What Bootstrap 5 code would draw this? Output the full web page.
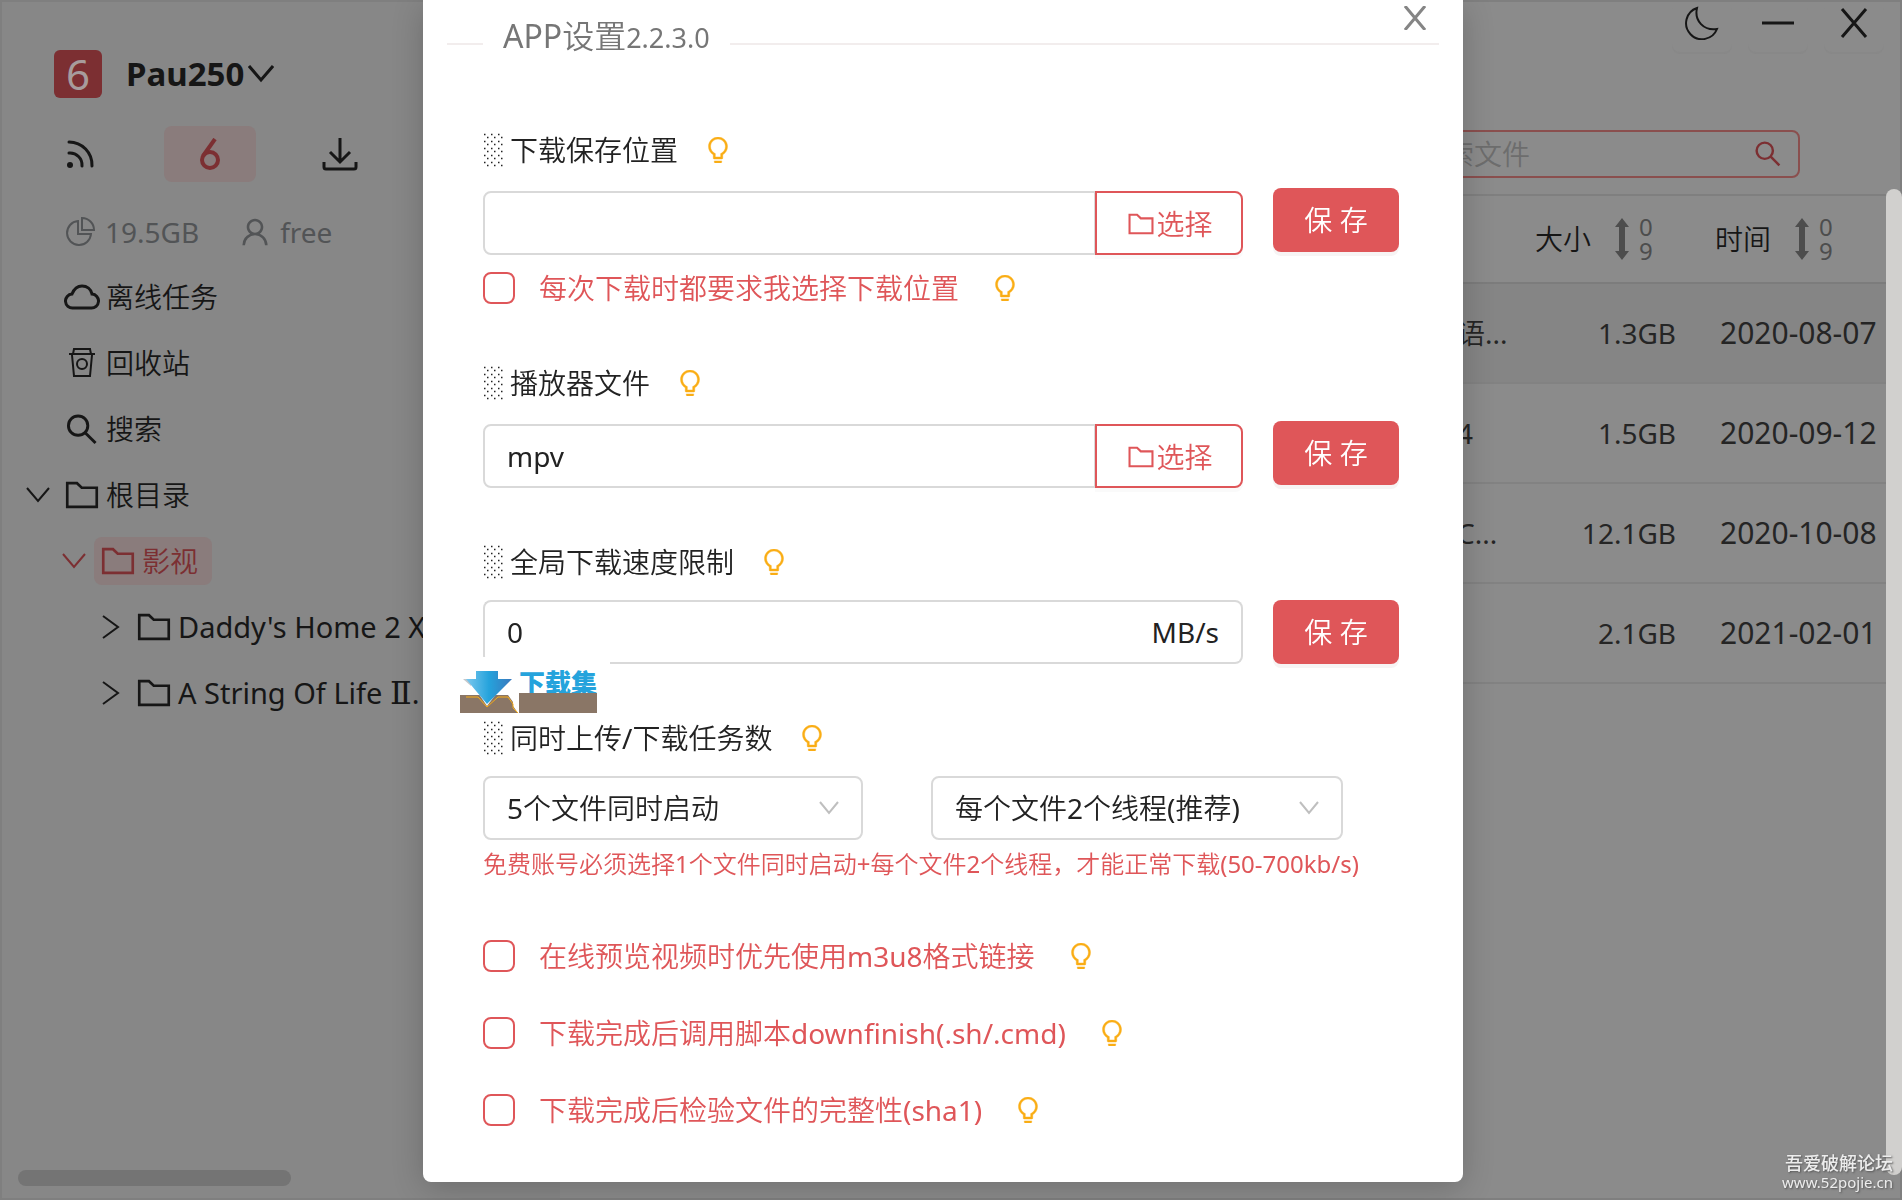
<!DOCTYPE html>
<html lang="zh-CN">
<head>
<meta charset="utf-8">
<meta name="viewport" content="width=device-width, initial-scale=1">
<title>APP设置</title>
<link href="https://cdn.jsdelivr.net/npm/bootstrap@5.3.0/dist/css/bootstrap.min.css" rel="stylesheet">
<style>
  :root { --brand: #df5659; --brand-dim: #7c2f32; --ink: #161616; --rule: #7f7f7f; --line: #d9d9d9; }
  body { font-family: "Noto Sans", "Noto Sans CJK SC DemiLight", "Noto Sans CJK SC Light", "Noto Sans CJK SC", sans-serif; font-weight: 400; font-size: 28px; line-height: 40px; color: var(--ink); background: #8b8b8b; overflow: hidden; }
  svg { display: block; flex: none; fill: currentColor; }
  .stroked { fill: none; stroke: currentColor; }
  a { color: inherit; text-decoration: none; }

  .app-shell { border: 2px solid var(--rule); }
  .app-side { width: 558px; background: #878787; padding: 46px 0 12px; }
  .brand-row { padding-left: 52px; gap: 24px; height: 52px; }
  .brand-tile { width: 48px; height: 48px; border-radius: 6px; background: var(--brand-dim); color: #a79c9c; font-size: 42px; line-height: 48px; }
  .brand-name { font-size: 33px; font-weight: 700; gap: 4px; }
  .tool-row { padding-left: 64px; margin-top: 26px; width: 356px; height: 56px; }
  .tool-on { width: 92px; height: 56px; border-radius: 8px; background: #8a7c7c; color: var(--brand-dim); margin-left: 4px; }
  .quota-row { padding-left: 63px; height: 64px; margin-top: 18px; color: #525456; gap: 10px; }
  .quota-row .who { margin-left: 31px; }
  .side-item { height: 66px; gap: 6px; white-space: nowrap; }
  .side-item.lv0 { padding-left: 62px; }
  .side-item.lv1 { padding-left: 24px; }
  .side-item.lv2 { padding-left: 60px; color: var(--brand-dim); }
  .side-item.lv3 { padding-left: 96px; font-size: 29px; }
  .side-item .twist { width: 24px; margin-right: 8px; }
  .node { gap: 6px; height: 48px; }
  .roman { font-family: "DejaVu Serif", "Liberation Serif", serif; font-size: 32px; line-height: 40px; }
  .lv2 .node { background: #8a7c7c; border-radius: 8px; padding: 0 14px 0 6px; margin-left: -6px; }
  .side-scroll { width: 273px; height: 16px; border-radius: 8px; background: #747474; margin-left: 16px; }

  .win-row { padding-right: 16px; gap: 16px; height: 52px; }
  .win-btn { width: 60px; height: 50px; border: 0; padding: 0 0 8px; background: transparent; color: var(--ink); border-radius: 8px; box-shadow: 0 2px 0 #888; }
  .find-row { padding: 76px 100px 16px 0; }
  .find-box { width: 420px; height: 48px; border: 2px solid #8a4f4e; border-radius: 8px; padding: 0 17px 0 62px; color: var(--brand-dim); }
  .find-box input { background: transparent; border: 0; outline: 0; min-width: 0; color: var(--ink); }
  .find-box input::placeholder { color: #6d6d6d; opacity: 1; }
  .files { width: calc(100% - 14px); table-layout: fixed; border-collapse: collapse; border-top: 2px solid var(--rule); }
  .files th { font-weight: 400; height: 88px; padding: 0; border-bottom: 2px solid #7c7c7c; }
  .files td { height: 100px; padding: 0; border-bottom: 2px solid #828282; color: #252525; white-space: nowrap; }
  .files tbody tr:first-child td { background: #858585; }
  .files .c-size { width: 180px; }
  .files .c-date { width: 210px; }
  .files td.f-name { padding-left: 897px; }
  .files td.f-size { text-align: right; }
  .files td.f-date { padding-left: 44px; font-size: 30px; }
  .sorter { gap: 10px; color: #4d4d4d; padding-left: 39px; }
  .sorter .cap { color: var(--ink); margin-right: 14px; }
  .sorter .digits { font-size: 24px; line-height: 24px; }
  .page-scroll { position: fixed; right: 0; top: 189px; bottom: 25px; width: 16px; border-radius: 8px; background: #d1d0ce; }

  .dialog-layer { position: fixed; inset: 0 16px 0 0; }
  .dialog-card { width: 1040px; background: #fff; border-radius: 0 0 8px 8px; box-shadow: 0 6px 32px rgba(0,0,0,.2); color: #222; padding: 0 24px 51px; }
  .dialog-head { height: 88px; gap: 20px; color: #767676; }
  .dialog-head .rule-a { width: 36px; }
  .dialog-head .dash { border-top: 2px solid #f2eded; }
  .dialog-head h1 { font-size: 32px; font-weight: 400; line-height: 44px; padding-bottom: 14px; }
  .dialog-head h1 span { font-size: 27px; }
  .dialog-close { position: absolute; top: 0; right: 24px; width: 48px; height: 36px; border: 0; background: none; padding: 0; color: #858585; }
  .dialog-body { padding: 42px 40px 0 36px; gap: 54px; }
  .sec-title { height: 40px; margin-bottom: 18px; }
  .sec-title .shade { margin-right: 7px; }
  .bulb { color: #faad14; margin-left: 27px; }
  .field-row { gap: 30px; }
  .pick-row .input-group { margin-top: 3px; }
  .input-group { width: auto; }
  .input-group .form-control { height: 64px; border: 2px solid var(--line); border-radius: 8px; padding: 0 22px; font-size: 28px; color: #222; }
  .speed .form-control { border-right: 0; }
  .speed .input-group-text { background: #fff; border: 2px solid var(--line); border-left: 0; border-radius: 8px; padding: 0 22px; font-size: 28px; color: #222; }
  .btn-pick { width: 148px; border: 2px solid var(--brand); border-radius: 0 8px 8px 0; color: var(--brand); font-size: 28px; padding: 2px 0 0 2px; gap: 1px; box-shadow: 0 4px 0 #fafafa; }
  .btn-keep { width: 126px; height: 64px; border: 0; border-radius: 8px; background: var(--brand); color: #fff; font-size: 28px; padding: 0; box-shadow: 0 4px 0 #f7f4f4; }
  .tick-row { height: 42px; color: var(--brand); padding: 0; margin: 0; }
  .tick-row .form-check-input { width: 32px; height: 32px; border: 2px solid var(--brand); border-radius: 8px; margin: 0 24px 0 0; float: none; }
  .tick-row .bulb { margin-left: 33px; }
  .tick-first { margin-top: 12px; }
  .ticks { gap: 35px; }
  .form-select { --bs-form-select-bg-img: url("data:image/svg+xml,%3Csvg xmlns='http://www.w3.org/2000/svg' viewBox='0 0 20 14'%3E%3Cpath fill='none' stroke='%23bfbfbf' stroke-width='2' d='M1 1l9 11 9-11'/%3E%3C/svg%3E"); height: 64px; border: 2px solid var(--line); border-radius: 8px; padding: 0 60px 0 22px; font-size: 28px; color: #222; background-size: 20px 14px; background-position: right 22px center; }
  .sel-a { width: 380px; }
  .sel-b { width: 412px; }
  .sel-row { gap: 68px; }
  .hint { font-size: 24px; line-height: 32px; margin: 8px 0 1px; color: var(--brand); white-space: nowrap; }

  .stamp { position: absolute; left: -27px; top: 115px; width: 154px; height: 60px; background: #fff; z-index: 6; }
  .stamp svg { margin: 14px 0 0 4px; }
  .stamp b { position: absolute; left: 63px; top: 9px; font: 900 26px/32px "Noto Sans CJK SC", sans-serif; color: #25a3dc; white-space: nowrap; }
  .stamp i { position: absolute; left: 63px; top: 36px; width: 78px; height: 20px; background: #8a7666; }
  .forum { position: fixed; right: 9px; bottom: 10px; color: #ededed; text-shadow: 1px 1px 2px #555; font-family: "Noto Sans", "Noto Sans CJK SC", sans-serif; font-size: 18px; line-height: 22px; font-weight: 500; text-align: right; }
  .forum small { font-size: 15px; line-height: 16px; font-weight: 400; display: block; }
</style>
</head>
<body>
<svg width="0" height="0" class="position-absolute" aria-hidden="true">
  <symbol id="i-bulb" viewBox="64 64 896 896"><path d="M384 888h256v40a32 32 0 0 1-32 32H416a32 32 0 0 1-32-32zM512 64c-181 0-328 147-328 328 0 121 66 227 164 284V792c0 18 14 32 32 32h264c18 0 32-14 32-32V676c98-57 164-163 164-284 0-181-147-328-328-328zm128 550L604 635V752H420V635l-36-21C305 568 256 484 256 392c0-141 115-256 256-256s256 115 256 256c0 92-49 176-128 222z" stroke="currentColor" stroke-width="14"/></symbol>
  <symbol id="i-folder" viewBox="64 64 896 896"><path d="M900 298H521L400 184H112v656h800V298zM846 774H178V250h194l120 114h354z"/></symbol>
  <symbol id="i-down" viewBox="0 0 24 16"><path fill="none" stroke="currentColor" stroke-width="2" d="M1 1l11 13L23 1"/></symbol>
  <symbol id="i-right" viewBox="0 0 24 24"><path fill="none" stroke="currentColor" stroke-width="2" d="M5 1l15 11L5 23"/></symbol>
  <symbol id="i-find" viewBox="0 0 32 32"><g fill="none" stroke="currentColor" stroke-width="3"><circle cx="12" cy="12" r="10"/><path d="M19 19l11 11"/></g></symbol>
  <symbol id="i-shade" viewBox="0 0 20 34"><g fill="none" stroke="#222" stroke-width="1.500" stroke-dasharray="1.500 5.500"><path d="M1 1.500h19M1 8.500h19M1 15.500h19M1 22.500h19M1 29.500h19"/><path d="M4 4.500h16M4 11.500h16M4 18.500h16M4 25.500h16M4 32.500h16"/></g></symbol>
  <symbol id="i-sort" viewBox="0 0 14 42"><path d="M7 0l7 9h-4v24h4l-7 9-7-9h4V9H0z"/></symbol>
</svg>

<div class="app-shell d-flex min-vh-100">
  <aside class="app-side d-flex flex-column flex-shrink-0">
    <div class="brand-row d-flex align-items-center">
      <div class="brand-tile text-center">6</div>
      <a href="#" class="brand-name d-flex align-items-center">Pau250
        <svg class="stroked" width="26" height="18" viewBox="0 0 26 18" stroke-width="3"><path d="M1 1l12 14L25 1"/></svg></a>
    </div>
    <nav class="tool-row d-flex align-items-center justify-content-between" aria-label="视图">
      <a href="#" aria-label="订阅"><svg class="stroked" width="28" height="30" viewBox="0 0 28 30" stroke-width="3" stroke-linecap="round"><path d="M3 3a23 23 0 0 1 23 24M3 14a12 12 0 0 1 13 13"/><circle cx="4" cy="26" r="3" fill="currentColor" stroke="none"/></svg></a>
      <a href="#" class="tool-on d-flex align-items-center justify-content-center" aria-label="网盘"><svg class="stroked" width="22" height="32" viewBox="0 0 22 32" stroke-width="4"><circle cx="11" cy="22" r="8"/><path d="M16 1L4 18"/></svg></a>
      <a href="#" aria-label="下载"><svg class="stroked" width="36" height="34" viewBox="0 0 36 34" stroke-width="3"><path d="M18 1v24M8 15l10 10 10-10M2 25v5q0 2 2 2h28q2 0 2-2v-5"/></svg></a>
    </nav>
    <div class="quota-row d-flex align-items-center">
      <svg class="stroked" width="30" height="30" viewBox="0 0 30 30" stroke-width="2"><path d="M13 4A12 12 0 1 0 26 17H13zM17 1v12h12A12 12 0 0 0 17 1z"/></svg>
      <span>19.5GB</span>
      <svg class="who" width="30" height="30" viewBox="64 64 896 896"><path d="M858 764a374 374 0 0 0-201-201C719 518 760 445 760 362c0-137-111-248-248-248S264 225 264 362c0 83 40 156 103 201a374 374 0 0 0-231 347h76a300 300 0 0 1 600 0h76a372 372 0 0 0-30-146zM512 534a172 172 0 1 1 0-344 172 172 0 0 1 0 344z"/></svg>
      <span>free</span>
    </div>
    <a href="#" class="side-item lv0 d-flex align-items-center"><svg class="stroked" width="36" height="26" viewBox="0 0 36 26" stroke-width="3"><path d="M9 24a7 7 0 0 1-1-14C10 5 13 2 18 2s9 3 10 8a7 7 0 0 1-1 14z"/></svg><span>离线任务</span></a>
    <a href="#" class="side-item lv0 d-flex align-items-center"><svg class="stroked" width="36" height="30" viewBox="0 0 36 30" stroke-width="2"><path d="M5 6h26M9 6l1-5h16l1 5M8 7l2 21h16l2-21"/><circle cx="18" cy="16" r="5"/></svg><span>回收站</span></a>
    <a href="#" class="side-item lv0 d-flex align-items-center"><svg width="36" height="31"><use href="#i-find"/></svg><span>搜索</span></a>
    <a href="#" class="side-item lv1 d-flex align-items-center"><svg class="twist" width="24" height="16"><use href="#i-down"/></svg><span class="node d-flex align-items-center"><svg width="36" height="36"><use href="#i-folder"/></svg><span>根目录</span></span></a>
    <a href="#" class="side-item lv2 d-flex align-items-center"><svg class="twist" width="24" height="16"><use href="#i-down"/></svg><span class="node d-flex align-items-center"><svg width="36" height="36"><use href="#i-folder"/></svg><span>影视</span></span></a>
    <a href="#" class="side-item lv3 d-flex align-items-center"><svg class="twist" width="24" height="24"><use href="#i-right"/></svg><span class="node d-flex align-items-center"><svg width="36" height="36"><use href="#i-folder"/></svg><span>Daddy's Home 2 X</span></span></a>
    <a href="#" class="side-item lv3 d-flex align-items-center"><svg class="twist" width="24" height="24"><use href="#i-right"/></svg><span class="node d-flex align-items-center"><svg width="36" height="36"><use href="#i-folder"/></svg><span>A String Of Life <span class="roman">Ⅱ</span>.</span></span></a>
    <div class="side-scroll mt-auto"></div>
  </aside>

  <main class="flex-grow-1">
    <div class="win-row d-flex justify-content-end">
      <button class="win-btn d-flex align-items-center justify-content-center" aria-label="夜间模式"><svg class="stroked" width="34" height="34" viewBox="0 0 34 34" stroke-width="2"><path d="M12 2A16 16 0 1 0 32 23C19 25 9 15 12 2z"/></svg></button>
      <button class="win-btn d-flex align-items-center justify-content-center" aria-label="最小化"><svg class="stroked" width="32" height="4" viewBox="0 0 32 4" stroke-width="3"><path d="M0 2h32"/></svg></button>
      <button class="win-btn d-flex align-items-center justify-content-center" aria-label="关闭窗口"><svg class="stroked" width="28" height="30" viewBox="0 0 28 30" stroke-width="3"><path d="M2 1l24 28M26 1L2 29"/></svg></button>
    </div>
    <div class="find-row d-flex justify-content-end">
      <label class="find-box d-flex align-items-center"><input class="flex-grow-1" type="text" placeholder="索文件" aria-label="搜索文件"><svg width="26" height="26"><use href="#i-find"/></svg></label>
    </div>
    <table class="files">
      <thead><tr>
        <th></th>
        <th class="c-size"><div class="sorter d-flex align-items-center"><span class="cap">大小</span><svg width="14" height="42"><use href="#i-sort"/></svg><span class="digits">0<br>9</span></div></th>
        <th class="c-date"><div class="sorter d-flex align-items-center"><span class="cap">时间</span><svg width="14" height="42"><use href="#i-sort"/></svg><span class="digits">0<br>9</span></div></th>
      </tr></thead>
      <tbody>
        <tr><td class="f-name">语...</td><td class="f-size">1.3GB</td><td class="f-date">2020-08-07</td></tr>
        <tr><td class="f-name">4</td><td class="f-size">1.5GB</td><td class="f-date">2020-09-12</td></tr>
        <tr><td class="f-name">C...</td><td class="f-size">12.1GB</td><td class="f-date">2020-10-08</td></tr>
        <tr><td class="f-name"></td><td class="f-size">2.1GB</td><td class="f-date">2021-02-01</td></tr>
      </tbody>
    </table>
  </main>
</div>
<div class="page-scroll"></div>

<div class="dialog-layer d-flex justify-content-center align-items-start">
  <section class="dialog-card position-relative" role="dialog" aria-labelledby="dlg-title">
    <header class="dialog-head d-flex align-items-center">
      <div class="dash rule-a"></div>
      <h1 id="dlg-title" class="m-0">APP设置<span>2.2.3.0</span></h1>
      <div class="dash flex-grow-1"></div>
    </header>
    <button class="dialog-close d-flex align-items-center justify-content-center" aria-label="关闭"><svg class="stroked" width="22" height="24" viewBox="0 0 22 24" stroke-width="3"><path d="M1 0l20 24M21 0L1 24"/></svg></button>

    <form class="dialog-body d-flex flex-column">
      <div>
        <label class="sec-title d-flex align-items-center" for="save-path"><svg class="shade" width="20" height="34"><use href="#i-shade"/></svg>下载保存位置<svg class="bulb" width="26" height="26"><use href="#i-bulb"/></svg></label>
        <div class="field-row pick-row d-flex align-items-start">
          <div class="input-group flex-grow-1"><input id="save-path" class="form-control" type="text"><button type="button" class="btn btn-pick d-flex align-items-center justify-content-center"><svg width="28" height="28"><use href="#i-folder"/></svg>选择</button></div>
          <button type="button" class="btn btn-keep">保 存</button>
        </div>
        <div class="tick-row tick-first form-check d-flex align-items-center"><input class="form-check-input" type="checkbox" id="ask"><label for="ask">每次下载时都要求我选择下载位置</label><svg class="bulb" width="26" height="26"><use href="#i-bulb"/></svg></div>
      </div>
      <div>
        <label class="sec-title d-flex align-items-center" for="player"><svg class="shade" width="20" height="34"><use href="#i-shade"/></svg>播放器文件<svg class="bulb" width="26" height="26"><use href="#i-bulb"/></svg></label>
        <div class="field-row pick-row d-flex align-items-start">
          <div class="input-group flex-grow-1"><input id="player" class="form-control" type="text" value="mpv"><button type="button" class="btn btn-pick d-flex align-items-center justify-content-center"><svg width="28" height="28"><use href="#i-folder"/></svg>选择</button></div>
          <button type="button" class="btn btn-keep">保 存</button>
        </div>
      </div>
      <div class="position-relative">
        <label class="sec-title d-flex align-items-center" for="speed"><svg class="shade" width="20" height="34"><use href="#i-shade"/></svg>全局下载速度限制<svg class="bulb" width="26" height="26"><use href="#i-bulb"/></svg></label>
        <div class="field-row d-flex align-items-start">
          <div class="input-group speed flex-grow-1"><input id="speed" class="form-control" type="text" value="0"><span class="input-group-text">MB/s</span></div>
          <button type="button" class="btn btn-keep">保 存</button>
        </div>
        <div class="stamp">
          <svg width="60" height="44" viewBox="0 0 60 44">
            <defs><linearGradient id="blue"><stop offset="0" stop-color="#7cc8ee"/><stop offset=".5" stop-color="#25a3dc"/><stop offset="1" stop-color="#3a78bd"/></linearGradient></defs>
            <path fill="#8a7666" d="M0 24h48l5 7v4l5 7H0z"/>
            <path fill="none" stroke="#faad14" d="M6 26h12l9 10 11-10h10l5 7v4l5 5"/>
            <path fill="#fff" d="M10 10h36L27 35z"/>
            <path fill="#c4c8cc" d="M3 8h8v7z"/>
            <path fill="url(#blue)" d="M16 0h22v8h14L27 33 6 8h10z"/>
          </svg>
          <b>下载集</b><i></i>
        </div>
      </div>
      <div>
        <label class="sec-title d-flex align-items-center" for="tasks"><svg class="shade" width="20" height="34"><use href="#i-shade"/></svg>同时上传/下载任务数<svg class="bulb" width="26" height="26"><use href="#i-bulb"/></svg></label>
        <div class="sel-row d-flex">
          <select id="tasks" class="form-select sel-a"><option>5个文件同时启动</option></select>
          <select class="form-select sel-b" aria-label="每个文件线程数"><option>每个文件2个线程(推荐)</option></select>
        </div>
        <p class="hint">免费账号必须选择1个文件同时启动+每个文件2个线程，才能正常下载(50-700kb/s)</p>
      </div>
      <div class="ticks d-flex flex-column">
        <div class="tick-row form-check d-flex align-items-center"><input class="form-check-input" type="checkbox" id="m3u8"><label for="m3u8">在线预览视频时优先使用m3u8格式链接</label><svg class="bulb" width="26" height="26"><use href="#i-bulb"/></svg></div>
        <div class="tick-row form-check d-flex align-items-center"><input class="form-check-input" type="checkbox" id="script"><label for="script">下载完成后调用脚本downfinish(.sh/.cmd)</label><svg class="bulb" width="26" height="26"><use href="#i-bulb"/></svg></div>
        <div class="tick-row form-check d-flex align-items-center"><input class="form-check-input" type="checkbox" id="sha"><label for="sha">下载完成后检验文件的完整性(sha1)</label><svg class="bulb" width="26" height="26"><use href="#i-bulb"/></svg></div>
      </div>
    </form>
  </section>
</div>

<div class="forum">吾爱破解论坛<small>www.52pojie.cn</small></div>
<script src="https://cdn.jsdelivr.net/npm/bootstrap@5.3.0/dist/js/bootstrap.bundle.min.js"></script>
</body>
</html>
